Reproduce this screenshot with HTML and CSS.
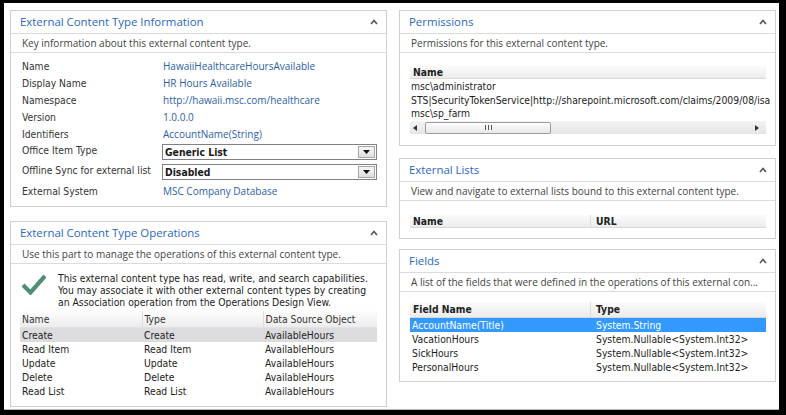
FILE: index.html
```html
<!DOCTYPE html>
<html>
<head>
<meta charset="utf-8">
<link rel="stylesheet" href="styles.css">
</head>
<body>
<div class="frame">
  <div class="col col-left">
    <section class="panel">
      <div class="ph"><h2 class="pt">External Content Type Information</h2><svg class="chev" width="8" height="6" viewBox="0 0 8 6"><path d="M1 5 L4 1.5 L7 5" fill="none" stroke="#555" stroke-width="1.6"/></svg></div>
      <div class="pd">Key information about this external content type.</div>
      <div class="pb info">
        <div class="kv">
          <span class="k">Name</span><span class="v">HawaiiHealthcareHoursAvailable</span>
          <span class="k">Display Name</span><span class="v">HR Hours Available</span>
          <span class="k">Namespace</span><span class="v">http://hawaii.msc.com/healthcare</span>
          <span class="k">Version</span><span class="v">1.0.0.0</span>
          <span class="k">Identifiers</span><span class="v">AccountName(String)</span>
          <span class="k k-sel">Office Item Type</span>
          <span class="select"><span class="sv">Generic List</span><span class="dd"><svg width="7" height="4" viewBox="0 0 7 4"><path d="M0 0 H7 L3.5 4 Z" fill="#111"/></svg></span></span>
          <span class="k k-sel">Offline Sync for external list</span>
          <span class="select"><span class="sv">Disabled</span><span class="dd"><svg width="7" height="4" viewBox="0 0 7 4"><path d="M0 0 H7 L3.5 4 Z" fill="#111"/></svg></span></span>
          <span class="k">External System</span><span class="v">MSC Company Database</span>
        </div>
      </div>
    </section>

    <section class="panel">
      <div class="ph"><h2 class="pt">External Content Type Operations</h2><svg class="chev" width="8" height="6" viewBox="0 0 8 6"><path d="M1 5 L4 1.5 L7 5" fill="none" stroke="#555" stroke-width="1.6"/></svg></div>
      <div class="pd">Use this part to manage the operations of this external content type.</div>
      <div class="pb ops">
        <div class="note">
          <svg class="check" width="24" height="22" viewBox="0 0 24 22"><polyline points="1,12 8.5,19.5 23,3" fill="none" stroke="#4f8e74" stroke-width="4.2"/></svg>
          <p class="note-text">This external content type has read, write, and search capabilities.<br>You may associate it with other external content types by creating<br>an Association operation from the Operations Design View.</p>
        </div>
        <table class="grid ops-grid">
          <colgroup><col class="c1"><col class="c2"><col class="c3"></colgroup>
          <thead><tr><th>Name</th><th>Type</th><th>Data Source Object</th></tr></thead>
          <tbody>
            <tr class="sel-gray"><td>Create</td><td>Create</td><td>AvailableHours</td></tr>
            <tr><td>Read Item</td><td>Read Item</td><td>AvailableHours</td></tr>
            <tr><td>Update</td><td>Update</td><td>AvailableHours</td></tr>
            <tr><td>Delete</td><td>Delete</td><td>AvailableHours</td></tr>
            <tr><td>Read List</td><td>Read List</td><td>AvailableHours</td></tr>
          </tbody>
        </table>
      </div>
    </section>
  </div>

  <div class="col col-right">
    <section class="panel">
      <div class="ph"><h2 class="pt">Permissions</h2><svg class="chev" width="8" height="6" viewBox="0 0 8 6"><path d="M1 5 L4 1.5 L7 5" fill="none" stroke="#555" stroke-width="1.6"/></svg></div>
      <div class="pd">Permissions for this external content type.</div>
      <div class="pb perm">
        <div class="lhead"><span class="hc">Name</span></div>
        <div class="prows">
          <div class="prow">msc\administrator</div>
          <div class="prow">STS|SecurityTokenService|http://sharepoint.microsoft.com/claims/2009/08/isa</div>
          <div class="prow">msc\sp_farm</div>
        </div>
        <div class="hscroll">
          <svg class="arr" width="4" height="6" viewBox="0 0 4 6"><path d="M4 0 V6 L0 3 Z" fill="#333"/></svg>
          <div class="thumb"><svg width="7" height="5" viewBox="0 0 7 5"><path d="M0.5 0 V5 M3.5 0 V5 M6.5 0 V5" stroke="#555" stroke-width="1"/></svg></div>
          <span class="track"></span>
          <svg class="arr" width="4" height="6" viewBox="0 0 4 6"><path d="M0 0 V6 L4 3 Z" fill="#333"/></svg>
        </div>
      </div>
    </section>

    <section class="panel panel-lists">
      <div class="ph"><h2 class="pt">External Lists</h2><svg class="chev" width="8" height="6" viewBox="0 0 8 6"><path d="M1 5 L4 1.5 L7 5" fill="none" stroke="#555" stroke-width="1.6"/></svg></div>
      <div class="pd">View and navigate to external lists bound to this external content type.</div>
      <div class="pb lists">
        <div class="lhead two"><span class="hc">Name</span><span class="hc">URL</span></div>
      </div>
    </section>

    <section class="panel panel-fields">
      <div class="ph"><h2 class="pt">Fields</h2><svg class="chev" width="8" height="6" viewBox="0 0 8 6"><path d="M1 5 L4 1.5 L7 5" fill="none" stroke="#555" stroke-width="1.6"/></svg></div>
      <div class="pd">A list of the fields that were defined in the operations of this external con...</div>
      <div class="pb fields">
        <div class="lhead two tall"><span class="hc">Field Name</span><span class="hc">Type</span></div>
        <div class="frow sel-blue"><span>AccountName(Title)</span><span>System.String</span></div>
        <div class="frow"><span>VacationHours</span><span>System.Nullable&lt;System.Int32&gt;</span></div>
        <div class="frow"><span>SickHours</span><span>System.Nullable&lt;System.Int32&gt;</span></div>
        <div class="frow"><span>PersonalHours</span><span>System.Nullable&lt;System.Int32&gt;</span></div>
      </div>
    </section>
  </div>
</div>
</body>
</html>
```

FILE: styles.css
```css
html, body {
  margin: 0;
  padding: 0;
  background: #000;
}
body {
  width: 786px;
  height: 415px;
  overflow: hidden;
}
.frame {
  box-sizing: border-box;
  margin: 3px 7px 0 4px;
  width: 775px;
  height: 407px;
  background: #fff;
  border-bottom: 1px solid #b8b8b8;
  padding: 7px 3px 0 6px;
  display: flex;
  gap: 12px;
}
.col {
  width: 377px;
  display: flex;
  flex-direction: column;
}
.col-left { gap: 14px; }
.panel-lists { margin-top: 12px; }
.panel-fields { margin-top: 10px; }

.panel {
  border: 1px solid #cbd0d7;
  background: #fff;
}
.ph {
  height: 22px;
  display: flex;
  align-items: center;
  justify-content: space-between;
  padding: 0 8px 0 9px;
  border-bottom: 1px solid #d8dce2;
}
.pt {
  margin: 0;
  font: normal 11.4px/22px "Open Sans", sans-serif;
  color: #2a66c4;
}
.chev { display: block; }
.pd {
  height: 18px;
  line-height: 18px;
  padding-left: 11px;
  border-bottom: 1px solid #d8dce2;
  font: 10px/18px "Open Sans", sans-serif;
  color: #444;
  white-space: nowrap;
  overflow: hidden;
}

.k, .note-text, .grid, .prow, .frow, .hc, .sv {
  font-family: "DejaVu Sans Condensed", "DejaVu Sans", sans-serif;
  font-stretch: condensed;
  font-size: 10.3px;
}

/* info */
.info { padding: 5px 9px 6px 11px; }
.kv {
  display: grid;
  grid-template-columns: 140px 215px;
  grid-template-rows: repeat(5, 17px) 20px 20px 17px;
}
.k {
  color: #333;
  line-height: 17px;
  white-space: nowrap;
}
.k-sel { line-height: 14px; }
.v {
  font: 10px/17px "Open Sans", sans-serif;
  color: #2c5ea8;
  padding-left: 1px;
  white-space: nowrap;
}
.select {
  box-sizing: border-box;
  margin-top: 1px;
  height: 16px;
  border: 1px solid #7e8186;
  display: flex;
  background: #fff;
}
.sv {
  flex: 1;
  font-weight: bold;
  color: #1a1a1a;
  line-height: 14px;
  padding-left: 2px;
}
.dd {
  box-sizing: border-box;
  width: 17px;
  height: 12px;
  margin: 1px 1px 1px 0;
  border: 1px solid #a4a6a9;
  background: linear-gradient(#f7f7f7, #dedede);
  display: flex;
  align-items: center;
  justify-content: center;
}

/* operations */
.ops { padding: 8px 9px 8px 9px; }
.note {
  display: flex;
  padding-left: 2px;
}
.check {
  display: block;
  width: 24px;
  height: 22px;
  margin-top: 1px;
  margin-right: 12px;
  flex: none;
}
.note-text {
  margin: 0;
  line-height: 12px;
  color: #1c1c1c;
  white-space: nowrap;
}
.grid {
  margin-top: 3px;
  width: 357px;
  table-layout: fixed;
  border-collapse: collapse;
  color: #1c1c1c;
}
.c1 { width: 122px; }
.c2 { width: 121px; }
.c3 { width: 114px; }
.grid th {
  height: 16px;
  padding: 0 0 0 2px;
  text-align: left;
  font-weight: normal;
  color: #333;
  background: linear-gradient(#fdfdfd, #ececec);
  border-right: 1px solid #dcdcdc;
  border-bottom: 1px solid #e2e2e2;
}
.grid th:last-child { border-right: none; }
.grid td {
  height: 14px;
  padding: 0 0 0 2px;
  line-height: 14px;
  white-space: nowrap;
  overflow: hidden;
}
.sel-gray td { background: #dcdcdf; }

/* permissions / lists / fields */
.perm { padding: 13px 9px 11px 10px; }
.lists { padding: 14px 9px 10px 10px; }
.fields { padding: 10px 9px 7px 10px; }
.lhead {
  height: 12px;
  display: flex;
  background: linear-gradient(#fbfbfb, #ececec);
  border-bottom: 1px solid #d9d9d9;
}
.lhead.tall { height: 15px; }
.hc {
  font-weight: bold;
  color: #222;
  line-height: 12px;
  padding-left: 3px;
}
.tall .hc { line-height: 15px; }
.two .hc:first-child {
  width: 177px;
  border-right: 1px solid #dcdcdc;
}
.two .hc:last-child { padding-left: 5px; }
.prows { padding-top: 1px; }
.prow {
  height: 13.5px;
  line-height: 13.5px;
  color: #1c1c1c;
  white-space: nowrap;
  padding-left: 1px;
}
.hscroll {
  margin-top: 0.5px;
  height: 13px;
  display: flex;
  align-items: center;
  background: linear-gradient(#f3f3f3, #e5e5e5);
  padding: 0 7px 0 3px;
}
.arr { display: block; flex: none; }
.thumb {
  box-sizing: border-box;
  margin-left: 8px;
  width: 126px;
  height: 12px;
  border: 1px solid #9c9c9c;
  border-radius: 2px;
  background: linear-gradient(#fdfdfd, #e8e8e8);
  display: flex;
  align-items: center;
  justify-content: center;
}
.thumb svg { display: block; }
.track { flex: 1; }
.frow {
  height: 14px;
  display: flex;
  line-height: 14px;
  color: #1c1c1c;
  white-space: nowrap;
}
.frow span:first-child {
  width: 184px;
  padding-left: 2px;
}
.sel-blue {
  background: #3399ff;
  color: #fff;
}
```
